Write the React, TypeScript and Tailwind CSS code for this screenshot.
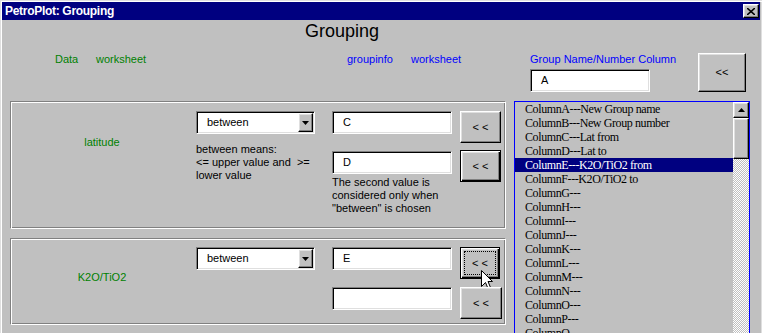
import React from "react";

const raised =
  "border border-t-white border-l-white border-r-black border-b-black shadow-[inset_-1px_-1px_0_#808080,inset_1px_1px_0_#dfdfdf]";
const defaultBtn =
  "border border-black shadow-[inset_1px_1px_0_#ffffff,inset_-1px_-1px_0_#000000,inset_-2px_-2px_0_#808080,inset_2px_2px_0_#dfdfdf]";
const sunken =
  "border border-t-[#808080] border-l-[#808080] border-r-white border-b-white shadow-[inset_1px_1px_0_#000000,inset_-1px_-1px_0_#dfdfdf] bg-white";
const etched =
  "border border-t-[#808080] border-l-[#808080] border-r-white border-b-white shadow-[inset_1px_1px_0_#ffffff,inset_-1px_-1px_0_#808080]";

function Field({ value, w = "w-[120px]", extra = "" }: { value: string; w?: string; extra?: string }) {
  return (
    <div className={`${sunken} ${w} h-[23px] flex items-center pl-[10px] text-black ${extra}`}>{value}</div>
  );
}

function Select({ value }: { value: string }) {
  return (
    <div className={`${sunken} w-[119px] h-[23px] flex items-stretch p-[1px]`}>
      <div className="flex-1 flex items-center pl-[9px] text-black">{value}</div>
      <div className={`${raised} w-[15px] bg-[#c0c0c0] flex items-center justify-center`}>
        <svg width="7" height="4" viewBox="0 0 7 4">
          <polygon points="0,0 7,0 3.5,4" fill="#000" />
        </svg>
      </div>
    </div>
  );
}

function Btn({
  label,
  w,
  h,
  isDefault = false,
  focused = false,
  extra = "",
  children,
}: {
  label: string;
  w: string;
  h: string;
  isDefault?: boolean;
  focused?: boolean;
  extra?: string;
  children?: React.ReactNode;
}) {
  return (
    <div
      className={`${isDefault ? defaultBtn : raised} ${w} ${h} bg-[#c0c0c0] flex items-stretch relative text-black ${extra}`}
    >
      <div
        className={`flex-1 flex items-center justify-center whitespace-pre ${
          focused ? "m-[3px] border border-dotted border-black" : ""
        }`}
      >
        {label}
      </div>
      {children}
    </div>
  );
}

const items = [
  "ColumnA---New Group name",
  "ColumnB---New Group number",
  "ColumnC---Lat from",
  "ColumnD---Lat to",
  "ColumnE---K2O/TiO2 from",
  "ColumnF---K2O/TiO2 to",
  "ColumnG---",
  "ColumnH---",
  "ColumnI---",
  "ColumnJ---",
  "ColumnK---",
  "ColumnL---",
  "ColumnM---",
  "ColumnN---",
  "ColumnO---",
  "ColumnP---",
  "ColumnQ---",
];

export default function App() {
  return (
    <div className="w-[762px] h-[333px] overflow-hidden bg-[#c0c0c0] flex flex-col font-['Liberation_Sans',Arial,sans-serif] text-[11px] leading-[13px] shadow-[inset_1px_1px_0_#dfdfdf,inset_2px_2px_0_#ffffff,inset_-1px_0_0_#dfdfdf]">
      {/* Title bar */}
      <div className="mx-[2px] mt-[2px] h-[18px] shrink-0 bg-[#000080] flex items-center justify-between pl-[3px] pr-[1px]">
        <span className="text-white font-bold text-[12px] tracking-[-0.3px] leading-[18px]">PetroPlot: Grouping</span>
        <div className={`${raised} w-[16px] h-[14px] bg-[#c0c0c0] flex items-center justify-center`}>
          <svg width="8" height="7" viewBox="0 0 8 7">
            <path d="M0 0 L8 7 M8 0 L0 7" stroke="#000" strokeWidth="1.6" />
          </svg>
        </div>
      </div>

      {/* Heading */}
      <div className="h-[22px] shrink-0 pl-[305px] text-[18px] leading-[22px] text-black">Grouping</div>

      {/* Header labels row */}
      <div className="h-[59px] shrink-0 flex items-start">
        <div className="w-[96px] pl-[55px] mt-[11px] text-[#008000]">Data</div>
        <div className="w-[251px] mt-[11px] text-[#008000]">worksheet</div>
        <div className="w-[64px] mt-[11px] text-[#0000ff]">groupinfo</div>
        <div className="w-[119px] mt-[11px] text-[#0000ff]">worksheet</div>
        <div className="w-[168px] mt-[11px] flex flex-col">
          <div className="text-[#0000ff]">Group Name/Number Column</div>
          <Field value="A" w="w-[120px]" extra="mt-[3px]" />
        </div>
        <Btn label="<<" w="w-[48px]" h="h-[39px]" extra="mt-[11px]" />
      </div>

      {/* Main area */}
      <div className="flex items-start flex-1">
        <div className="ml-[10px] w-[496px] flex flex-col">
          {/* Frame 1 */}
          <div className={`${etched} h-[128px] flex items-start pt-[9px]`}>
            <div className="w-[185px] pr-[3px] text-center text-[#008000] mt-[25px]">latitude</div>
            <div className="w-[119px] flex flex-col">
              <Select value="between" />
              <div className="mt-[9px] text-black whitespace-pre">
                {"between means:\n<= upper value and  >=\nlower value"}
              </div>
            </div>
            <div className="ml-[17px] w-[120px] flex flex-col">
              <Field value="C" />
              <Field value="D" extra="mt-[17px]" />
              <div className="mt-[2px] text-black whitespace-pre">
                {'The second value is\nconsidered only when\n"between" is chosen'}
              </div>
            </div>
            <div className="ml-[8px] flex flex-col">
              <Btn label="< <" w="w-[41px]" h="h-[32px]" />
              <Btn label="< <" w="w-[41px]" h="h-[32px]" isDefault extra="mt-[7px]" />
            </div>
          </div>

          {/* Frame 2 */}
          <div className={`${etched} mt-[9px] h-[87px] flex items-start pt-[8px]`}>
            <div className="w-[185px] pr-[3px] text-center text-[#008000] mt-[24px]">K2O/TiO2</div>
            <div className="w-[119px] flex flex-col">
              <Select value="between" />
            </div>
            <div className="ml-[17px] w-[120px] flex flex-col">
              <Field value="E" />
              <Field value="" extra="mt-[17px]" />
            </div>
            <div className="ml-[8px] flex flex-col">
              <Btn label="< <" w="w-[40px]" h="h-[32px]" isDefault focused>
                <svg
                  className="absolute left-[20px] top-[22px]"
                  width="12"
                  height="19"
                  viewBox="0 0 12 19"
                >
                  <path
                    d="M0.5 0.5 V16.5 L4.5 12.5 L7 18.5 L9.5 17.5 L7 11.5 H11.5 Z"
                    fill="#fff"
                    stroke="#000"
                    strokeWidth="1"
                  />
                </svg>
              </Btn>
              <Btn label="< <" w="w-[42px]" h="h-[32px]" extra="mt-[8px]" />
            </div>
          </div>
        </div>

        {/* List */}
        <div className="ml-[8px] w-[236px] h-[245px] border-l border-t border-r border-[#0000ff] flex">
          <div className="w-[218px] flex flex-col font-['Liberation_Serif','Times_New_Roman',serif] text-[12px] tracking-[-0.4px] text-black">
            {items.map((it) => (
              <div
                key={it}
                className={`h-[14px] leading-[14px] pl-[10px] whitespace-nowrap ${
                  it.startsWith("ColumnE") ? "bg-[#000080] text-white" : ""
                }`}
              >
                {it}
              </div>
            ))}
          </div>
          <div className="w-[16px] flex flex-col">
            <div className={`${raised} h-[16px] bg-[#c0c0c0] flex items-center justify-center`}>
              <svg width="7" height="4" viewBox="0 0 7 4">
                <polygon points="0,4 7,4 3.5,0" fill="#000" />
              </svg>
            </div>
            <div className={`${raised} h-[41px] bg-[#c0c0c0]`} />
            <div className="flex-1 bg-[repeating-conic-gradient(#c0c0c0_0_25%,#ffffff_0_50%)] bg-[length:2px_2px]" />
          </div>
        </div>
      </div>
    </div>
  );
}
